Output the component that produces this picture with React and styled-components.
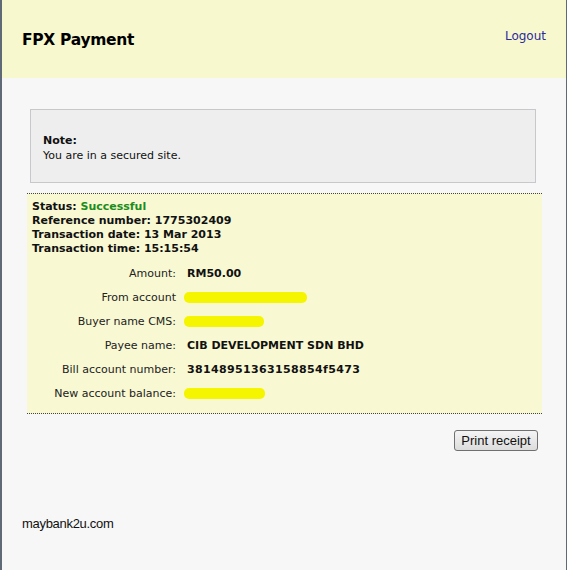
import React from "react";
import styled, { createGlobalStyle } from "styled-components";

const Global = createGlobalStyle`
  html, body {
    margin: 0;
    padding: 0;
    background: #f7f7f7;
  }
`;

const Frame = styled.div`
  box-sizing: border-box;
  width: 567px;
  min-height: 570px;
  border-left: 2px solid #5f6a76;
  border-right: 1px solid #5f6a76;
  background: #f7f7f7;
  font-family: "DejaVu Sans", Verdana, sans-serif;
  color: #111;
  display: flex;
  flex-direction: column;
`;

const Header = styled.div`
  height: 78px;
  background: #f8f8cf;
  display: flex;
  justify-content: space-between;
  align-items: flex-start;
  padding: 0 20px 0 20px;
`;

const Title = styled.h1`
  margin: 31px 0 0;
  font-size: 15.5px;
  letter-spacing: -0.3px;
  font-weight: bold;
  color: #000;
`;

const Logout = styled.a`
  margin-top: 29px;
  font-size: 12px;
  color: #2b2b9c;
  text-decoration: none;
  cursor: pointer;
`;

const Main = styled.div`
  padding: 31px 24px 0 25px;
`;

const Note = styled.div`
  box-sizing: border-box;
  margin: 0 6px 0 3px;
  height: 74px;
  background: #eeeeee;
  border: 1px solid #c6c8cc;
  padding: 23px 12px 0;
  font-size: 11px;
  line-height: 15px;
`;

const NoteTitle = styled.div`
  font-weight: bold;
`;

const Receipt = styled.div`
  margin-top: 10px;
  background: #f8f8d2;
  border-top: 1px dotted #444;
  border-bottom: 1px dotted #444;
  padding: 6px 5px 8px;
`;

const StatusLine = styled.div`
  font-size: 11px;
  font-weight: bold;
  line-height: 14px;
`;

const Success = styled.span`
  color: #1c8c1c;
`;

const Details = styled.div`
  display: grid;
  grid-template-columns: 144px 1fr;
  column-gap: 11px;
  grid-auto-rows: 24px;
  margin-top: 5px;
  font-size: 11px;
  align-items: center;
`;

const Label = styled.div`
  text-align: right;
  color: #222;
`;

const Value = styled.div`
  font-weight: bold;
  display: flex;
  align-items: center;
  letter-spacing: ${(p) => (p.wide ? "0.35px" : "0")};
`;

const Mask = styled.span`
  display: inline-block;
  width: ${(p) => p.w}px;
  height: 11px;
  margin-left: -3px;
  background: #f5f500;
  border-radius: 5px;
`;

const Actions = styled.div`
  display: flex;
  justify-content: flex-end;
  padding: 16px 4px 0 0;
`;

const Button = styled.button`
  box-sizing: border-box;
  width: 84px;
  height: 21px;
  font-family: "Liberation Sans", Arial, sans-serif;
  font-size: 13px;
  color: #111;
  border: 1px solid #707070;
  border-radius: 3px;
  background: linear-gradient(#f4f4f4, #dcdcdc);
  padding: 0;
  cursor: pointer;
`;

const Footer = styled.div`
  margin-top: auto;
  padding: 0 0 39px 20px;
  font-family: "Liberation Sans", Arial, sans-serif;
  font-size: 13px;
  letter-spacing: -0.3px;
  color: #111;
`;

const rows = [
  { label: "Amount:", value: "RM50.00" },
  { label: "From account", mask: 123 },
  { label: "Buyer name CMS:", mask: 80 },
  { label: "Payee name:", value: "CIB DEVELOPMENT SDN BHD" },
  { label: "Bill account number:", value: "38148951363158854f5473", wide: true },
  { label: "New account balance:", mask: 81 },
];

export default function App() {
  return (
    <>
      <Global />
      <Frame>
        <Header>
          <Title>FPX Payment</Title>
          <Logout>Logout</Logout>
        </Header>
        <Main>
          <Note>
            <NoteTitle>Note:</NoteTitle>
            You are in a secured site.
          </Note>
          <Receipt>
            <StatusLine>
              Status: <Success>Successful</Success>
            </StatusLine>
            <StatusLine>Reference number: 1775302409</StatusLine>
            <StatusLine>Transaction date: 13 Mar 2013</StatusLine>
            <StatusLine>Transaction time: 15:15:54</StatusLine>
            <Details>
              {rows.map((r) => (
                <React.Fragment key={r.label}>
                  <Label>{r.label}</Label>
                  <Value wide={r.wide}>{r.mask ? <Mask w={r.mask} /> : r.value}</Value>
                </React.Fragment>
              ))}
            </Details>
          </Receipt>
          <Actions>
            <Button>Print receipt</Button>
          </Actions>
        </Main>
        <Footer>maybank2u.com</Footer>
      </Frame>
    </>
  );
}
